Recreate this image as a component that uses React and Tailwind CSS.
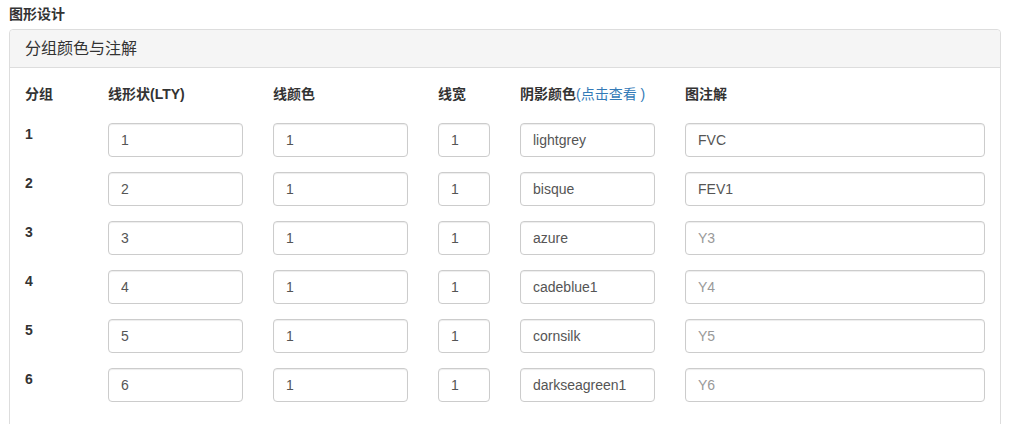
const rows = [
  { id: 1, lty: '1', col: '1', lwd: '1', shade: 'lightgrey', legend: 'FVC' },
  { id: 2, lty: '2', col: '1', lwd: '1', shade: 'bisque', legend: 'FEV1' },
  { id: 3, lty: '3', col: '1', lwd: '1', shade: 'azure', placeholder: 'Y3' },
  { id: 4, lty: '4', col: '1', lwd: '1', shade: 'cadeblue1', placeholder: 'Y4' },
  { id: 5, lty: '5', col: '1', lwd: '1', shade: 'cornsilk', placeholder: 'Y5' },
  { id: 6, lty: '6', col: '1', lwd: '1', shade: 'darkseagreen1', placeholder: 'Y6' },
];

function Field({ value, placeholder, width }) {
  return (
    <input
      type="text"
      defaultValue={value}
      placeholder={placeholder}
      className={`${width} h-[34px] border border-[#ccc] rounded-[4px] px-[12px] text-[14px] text-[#555] placeholder:text-[#999] bg-white shadow-[inset_0_1px_1px_rgba(0,0,0,0.075)] outline-none`}
    />
  );
}

export default function App() {
  return (
    <div
      className="min-h-screen bg-white pl-[9px] pr-[12px] text-[#333]"
      style={{ fontFamily: '"Liberation Sans", "Noto Sans CJK SC", sans-serif' }}
    >
      <div className="pt-[4px] mb-[5px] text-[14px] leading-[20px] font-bold">图形设计</div>

      <div className="border border-[#ddd] rounded-[4px] min-h-[420px]">
        <div className="h-[38px] flex items-center px-[15px] bg-[#f5f5f5] border-b border-[#ddd] rounded-t-[4px] text-[16px]">
          分组颜色与注解
        </div>

        <div className="pl-[15px] pr-[15px]">
          <div className="grid grid-cols-[83px_165px_165px_82px_165px_1fr] pt-[16px] pb-[19px] text-[14px] leading-[20px] font-bold">
            <div>分组</div>
            <div>线形状(LTY)</div>
            <div>线颜色</div>
            <div>线宽</div>
            <div>
              阴影颜色<span className="font-normal text-[#337ab7]">(点击查看 )</span>
            </div>
            <div>图注解</div>
          </div>

          {rows.map((r) => (
            <div
              key={r.id}
              className="grid grid-cols-[83px_165px_165px_82px_165px_1fr] h-[49px] items-start"
            >
              <div className="pt-[1px] text-[14px] leading-[20px] font-bold">{r.id}</div>
              <Field value={r.lty} width="w-[135px]" />
              <Field value={r.col} width="w-[135px]" />
              <Field value={r.lwd} width="w-[52px]" />
              <Field value={r.shade} width="w-[135px]" />
              <Field value={r.legend} placeholder={r.placeholder} width="w-[300px]" />
            </div>
          ))}
        </div>
      </div>
    </div>
  );
}
